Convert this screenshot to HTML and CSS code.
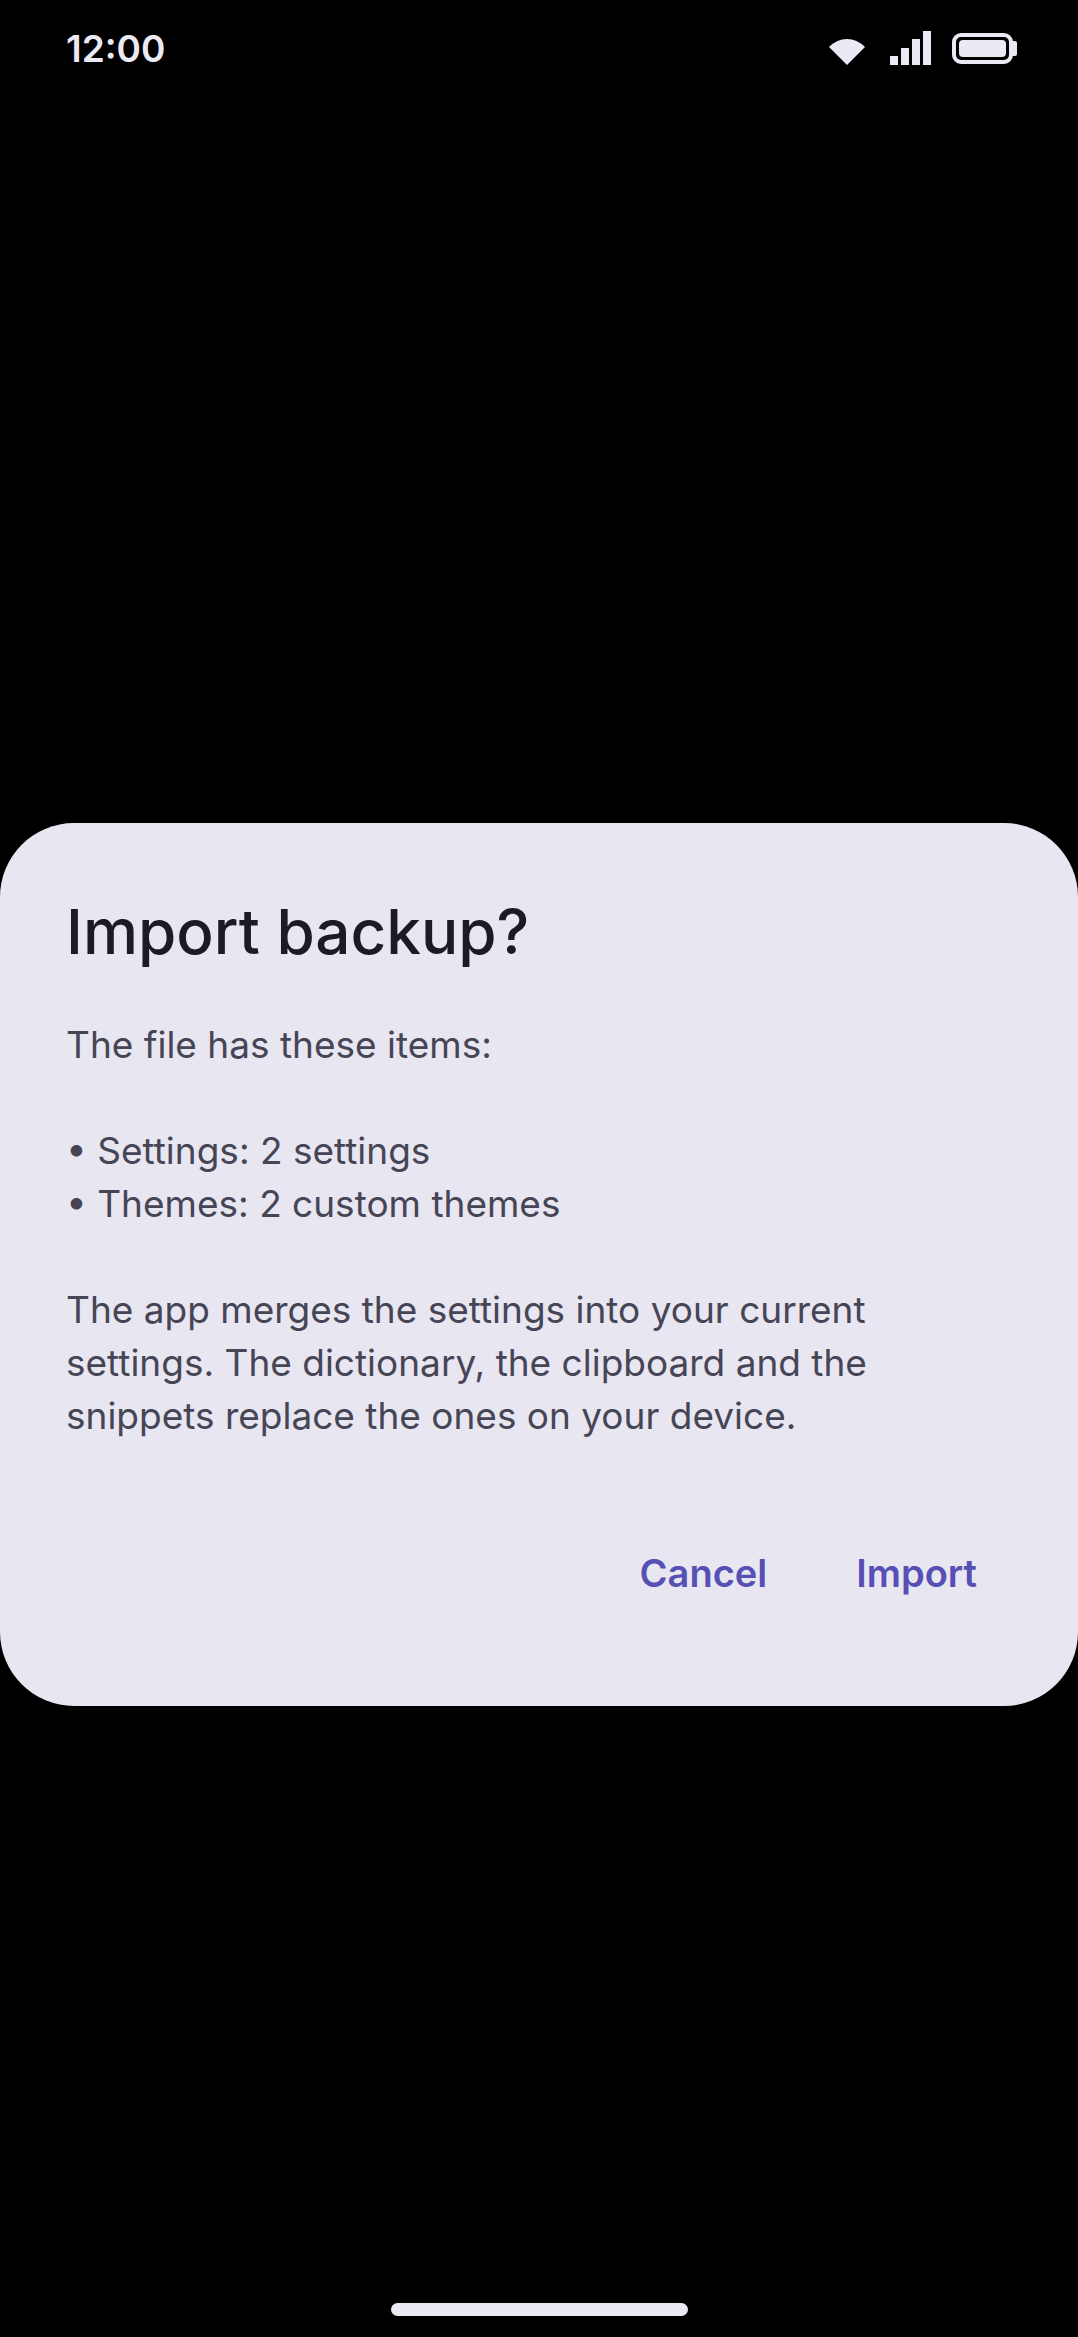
FILE: index.html
```html
<!DOCTYPE html>
<html lang="en">
<head>
<meta charset="utf-8">
<meta name="viewport" content="width=device-width, initial-scale=1">
<title>Import backup</title>
<link rel="stylesheet" href="styles.css">
</head>
<body>
<header class="status-bar">
  <time class="clock">12:00</time>
  <div class="status-icons">
    <svg width="42" height="34" viewBox="0 0 42 34" role="img" aria-label="Wi-Fi"><path d="M0 16Q8 8 18 8T36 16L18 34Z"/></svg>
    <svg width="42" height="34" viewBox="0 0 42 34" role="img" aria-label="Signal"><path d="M0 25h8v9H0zM11 17h8v17h-8zM22 8h8v26h-8zM33 0h8v34h-8z"/></svg>
    <svg width="66" height="34" viewBox="0 0 66 34" role="img" aria-label="Battery"><rect class="battery-outline" x="3" y="4" width="57" height="27" rx="7"/><rect x="8" y="9" width="47" height="17" rx="4"/><path d="M61 10h3q2 0 2 2v11q0 2-2 2h-3z"/></svg>
  </div>
</header>
<main class="screen">
  <section class="dialog" role="alertdialog" aria-labelledby="dialog-title" aria-describedby="dialog-text">
    <h1 class="dialog-title" id="dialog-title">Import backup?</h1>
    <div class="dialog-text" id="dialog-text">
      <p>The file has these items:</p>
      <ul class="items">
        <li>Settings: 2 settings</li>
        <li>Themes: 2 custom themes</li>
      </ul>
      <p>The app merges the settings into your current settings. The dictionary, the clipboard and the snippets replace the ones on your device.</p>
    </div>
    <div class="actions">
      <button type="button" class="text-button">Cancel</button>
      <button type="button" class="text-button">Import</button>
    </div>
  </section>
</main>
<footer class="nav-bar"><div class="nav-handle"></div></footer>
</body>
</html>
```

FILE: styles.css
```css
* {
  box-sizing: border-box;
}

body {
  display: flex;
  flex-direction: column;
  min-height: 100vh;
  margin: 0;
  background: #000;
  font-family: Inter, Roboto, sans-serif;
}

.status-bar {
  display: flex;
  align-items: center;
  justify-content: space-between;
  height: 96px;
  padding: 0 61px 0 66px;
  color: #ebeaf4;
}

.clock {
  font-size: 37px;
  font-weight: 600;
}

.status-icons {
  display: flex;
  align-items: center;
  gap: 19px;
  fill: currentColor;
}

.battery-outline {
  fill: none;
  stroke: currentColor;
  stroke-width: 4;
}

.screen {
  display: flex;
  flex: 1;
  align-items: center;
  padding-top: 150px;
}

.dialog {
  width: 100%;
  padding: 67px 66px;
  border-radius: 74px;
  background: #e8e6f1;
}

.dialog-title {
  margin: 0 0 44px;
  color: #1b1b23;
  font-size: 62px;
  font-weight: 500;
  line-height: 84px;
}

.dialog-text {
  display: flex;
  flex-direction: column;
  gap: 53px;
  color: #464555;
  font-size: 37px;
  line-height: 53px;
}

.dialog-text p {
  margin: 0;
}

.items {
  margin: 0;
  padding: 0;
  list-style: none;
}

.items li::before {
  content: "• ";
}

.actions {
  display: flex;
  justify-content: flex-end;
  gap: 19px;
  margin-top: 68px;
  padding-bottom: 3px;
}

.text-button {
  height: 126px;
  padding: 0 35px;
  border: 0;
  background: none;
  color: #5750b4;
  font: 600 38px Inter, Roboto, sans-serif;
}

.nav-bar {
  display: flex;
  align-items: center;
  justify-content: center;
  height: 55px;
}

.nav-handle {
  width: 297px;
  height: 13px;
  border-radius: 7px;
  background: #ebeaf4;
}
```
